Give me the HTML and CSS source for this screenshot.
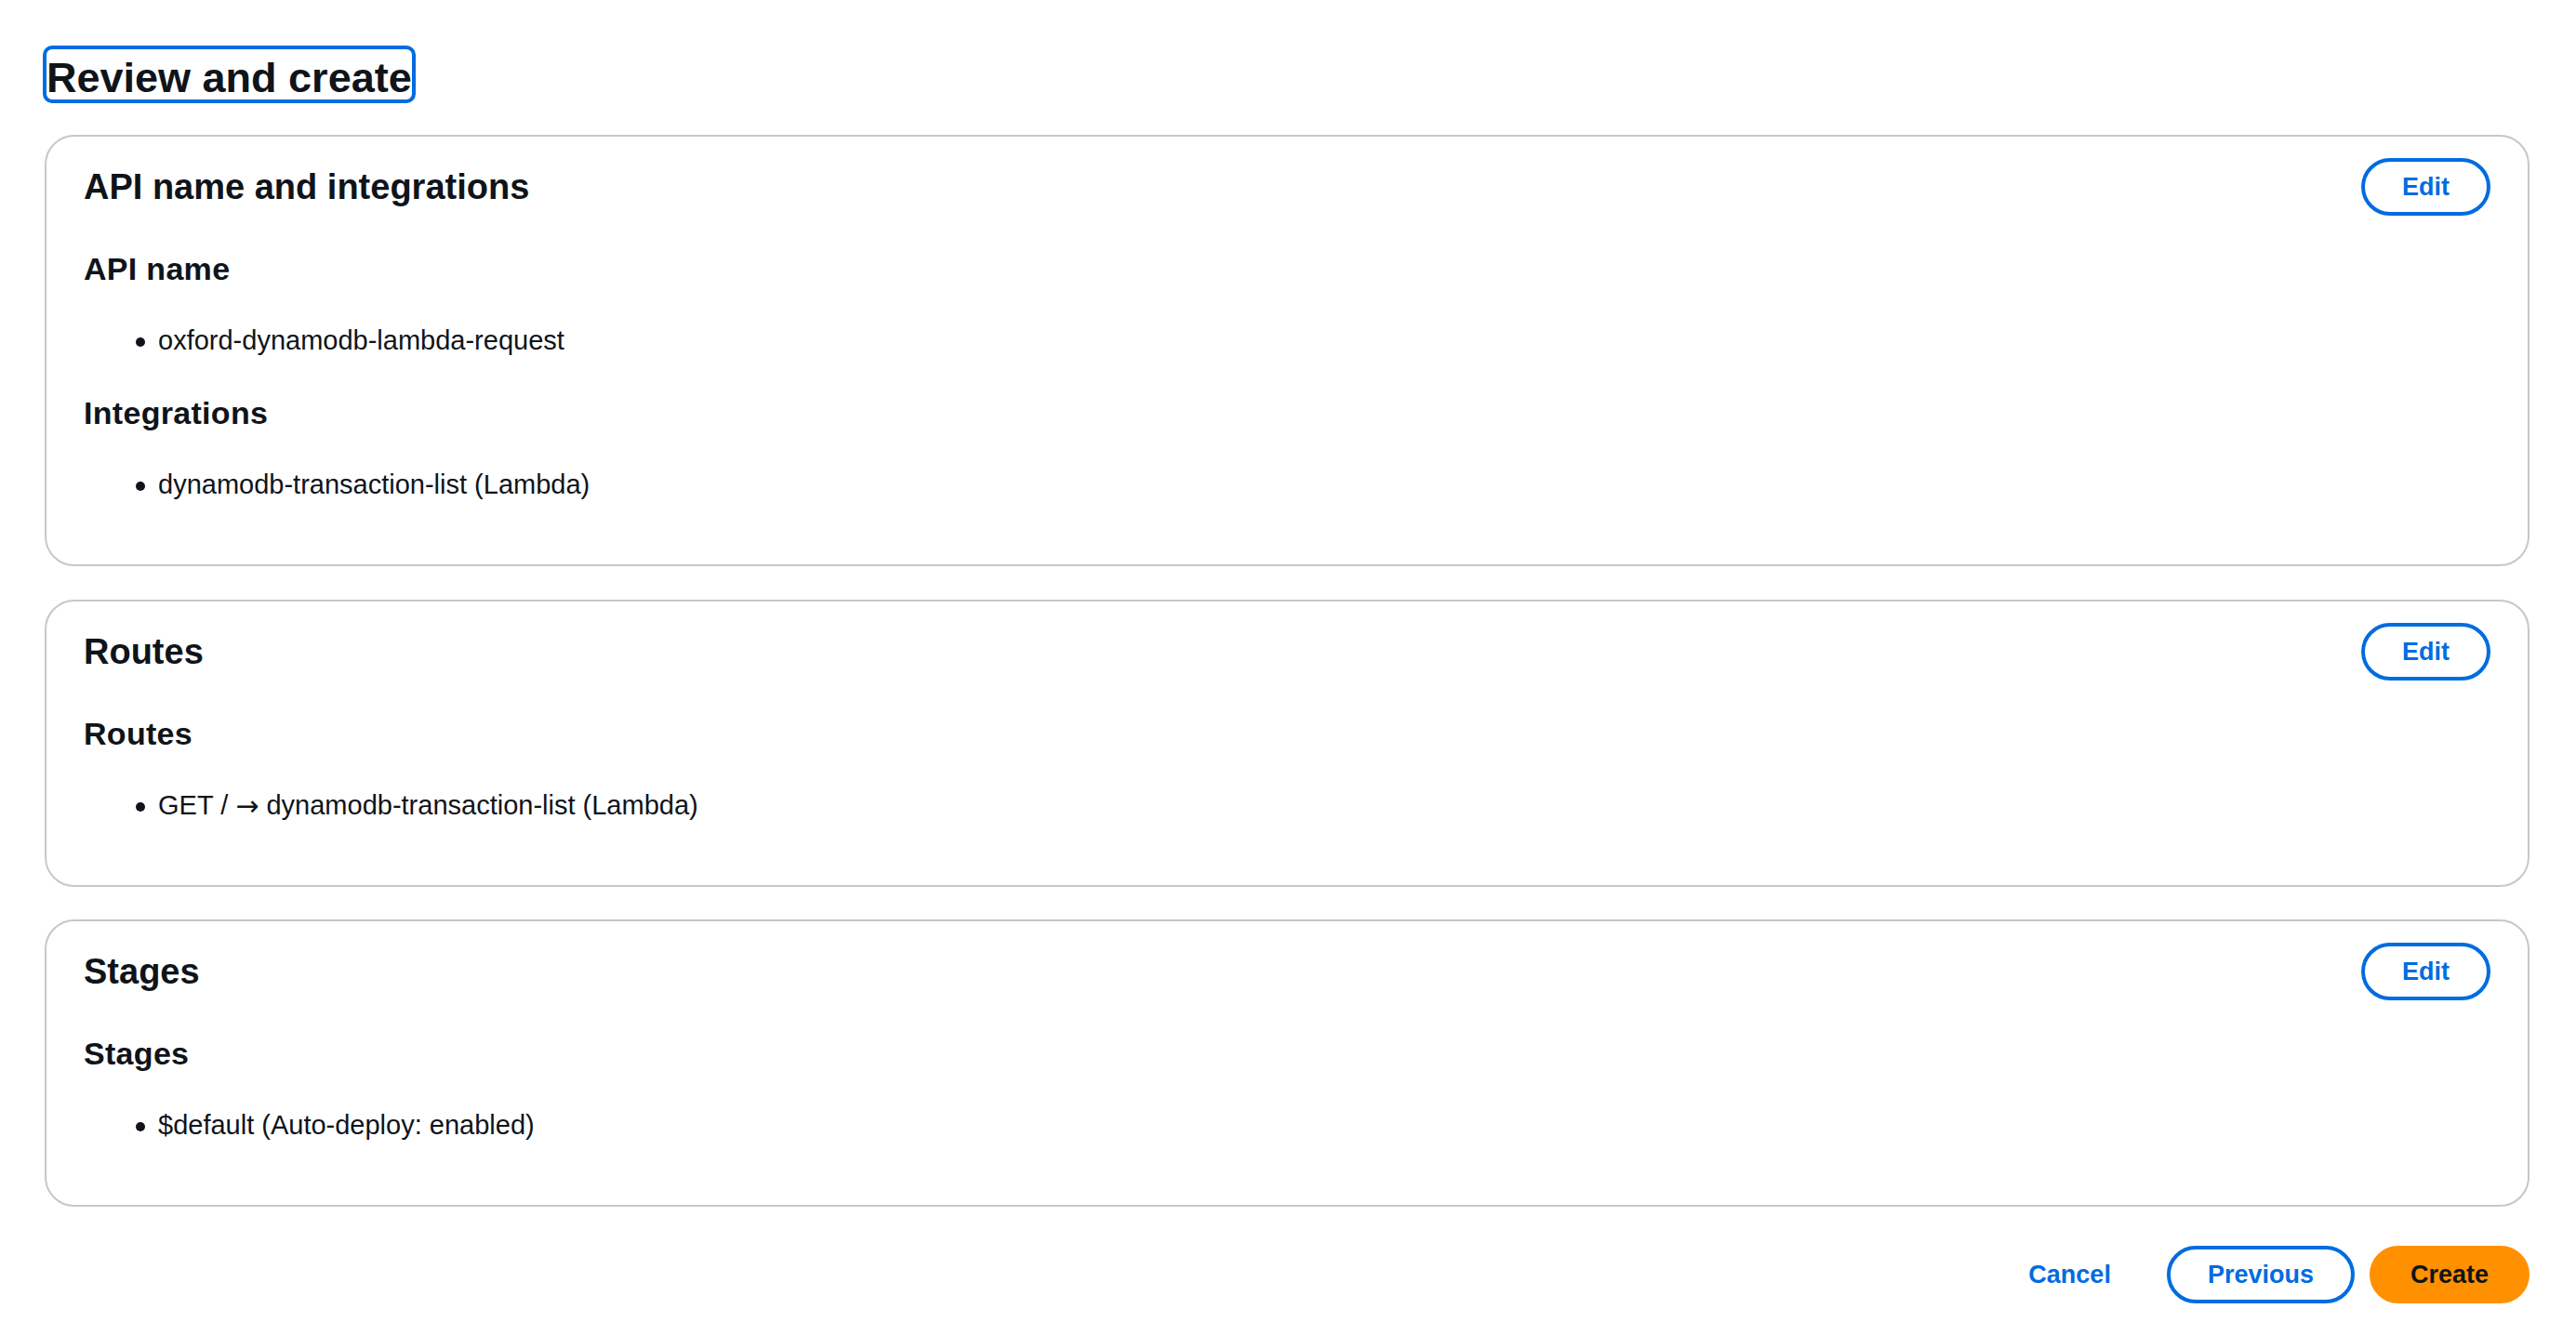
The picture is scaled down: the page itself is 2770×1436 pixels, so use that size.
FILE: index.html
```html
<!DOCTYPE html>
<html lang="en">
<head>
<meta charset="utf-8">
<title>Review and create</title>
<link rel="stylesheet" href="styles.css">
</head>
<body>
<main class="page">
  <div class="page-header">
    <h1 class="page-title" tabindex="-1">Review and create</h1>
  </div>

  <div class="cards">
    <section class="card">
      <div class="card-header">
        <h2 class="card-title">API name and integrations</h2>
        <button class="btn btn-normal" type="button">Edit</button>
      </div>
      <div class="card-body">
        <h3 class="sub-title">API name</h3>
        <ul class="list">
          <li>oxford-dynamodb-lambda-request</li>
        </ul>
        <h3 class="sub-title">Integrations</h3>
        <ul class="list">
          <li>dynamodb-transaction-list (Lambda)</li>
        </ul>
      </div>
    </section>

    <section class="card">
      <div class="card-header">
        <h2 class="card-title">Routes</h2>
        <button class="btn btn-normal" type="button">Edit</button>
      </div>
      <div class="card-body">
        <h3 class="sub-title">Routes</h3>
        <ul class="list">
          <li>GET /&nbsp;<span class="arrow">→</span>&nbsp;dynamodb-transaction-list (Lambda)</li>
        </ul>
      </div>
    </section>

    <section class="card">
      <div class="card-header">
        <h2 class="card-title">Stages</h2>
        <button class="btn btn-normal" type="button">Edit</button>
      </div>
      <div class="card-body">
        <h3 class="sub-title">Stages</h3>
        <ul class="list">
          <li>$default (Auto-deploy: enabled)</li>
        </ul>
      </div>
    </section>
  </div>

  <div class="actions">
    <button class="btn btn-link" type="button">Cancel</button>
    <button class="btn btn-normal" type="button">Previous</button>
    <button class="btn btn-primary" type="button">Create</button>
  </div>
</main>
</body>
</html>
```

FILE: styles.css
```css
* {
  box-sizing: border-box;
}

html, body {
  margin: 0;
  padding: 0;
  background: #ffffff;
}

body {
  font-family: "Liberation Sans", Arial, sans-serif;
  color: #0f141a;
}

.page {
  padding: 53px 50px 0 48px;
}

.page-header {
  display: flex;
  margin-bottom: 38px;
}

.page-title {
  margin: 0 0 0 2px;
  padding: 7px 0 0 0;
  font-size: 45px;
  line-height: 47px;
  font-weight: 700;
  outline: 4px solid #006ce0;
  border-radius: 6px;
}

.cards {
  display: flex;
  flex-direction: column;
  gap: 35.5px;
}

.card {
  border: 2px solid #c6c6cd;
  border-radius: 32px;
  background: #ffffff;
}

.card-header {
  display: flex;
  align-items: center;
  justify-content: space-between;
  padding: 23px 40px 0 40px;
}

.card-title {
  margin: 0;
  font-size: 38px;
  line-height: 48px;
  font-weight: 700;
}

.card-body {
  padding: 35px 40px 30px 40px;
}

.sub-title {
  margin: 0;
  font-size: 34px;
  line-height: 44px;
  font-weight: 700;
  letter-spacing: 0.3px;
}

.list {
  list-style: none;
  margin: 35px 0 36px 0;
  padding: 0 0 0 56px;
}

.list li {
  display: flex;
  align-items: center;
  font-size: 29px;
  line-height: 40px;
  height: 40px;
  white-space: pre;
}

.list li::before {
  content: "";
  flex: none;
  width: 10px;
  height: 10px;
  border-radius: 50%;
  background: #0f141a;
  margin: 4px 14px 0 0;
}

.arrow {
  font-family: "DejaVu Sans", sans-serif;
  font-size: 30px;
  line-height: 40px;
  position: relative;
  top: 1px;
}

.btn {
  font-family: "Liberation Sans", Arial, sans-serif;
  font-size: 27px;
  line-height: 40px;
  font-weight: 700;
  padding: 7px 40px;
  border: 4px solid transparent;
  border-radius: 40px;
  background: transparent;
  cursor: pointer;
  white-space: nowrap;
}

.btn-normal {
  color: #006ce0;
  border-color: #006ce0;
  background: #ffffff;
}

.btn-link {
  color: #006ce0;
}

.btn-primary {
  color: #0f141a;
  background: #ff9100;
  border-color: #ff9100;
}

.actions {
  display: flex;
  justify-content: flex-end;
  gap: 16px;
  margin-top: 42px;
}
```
